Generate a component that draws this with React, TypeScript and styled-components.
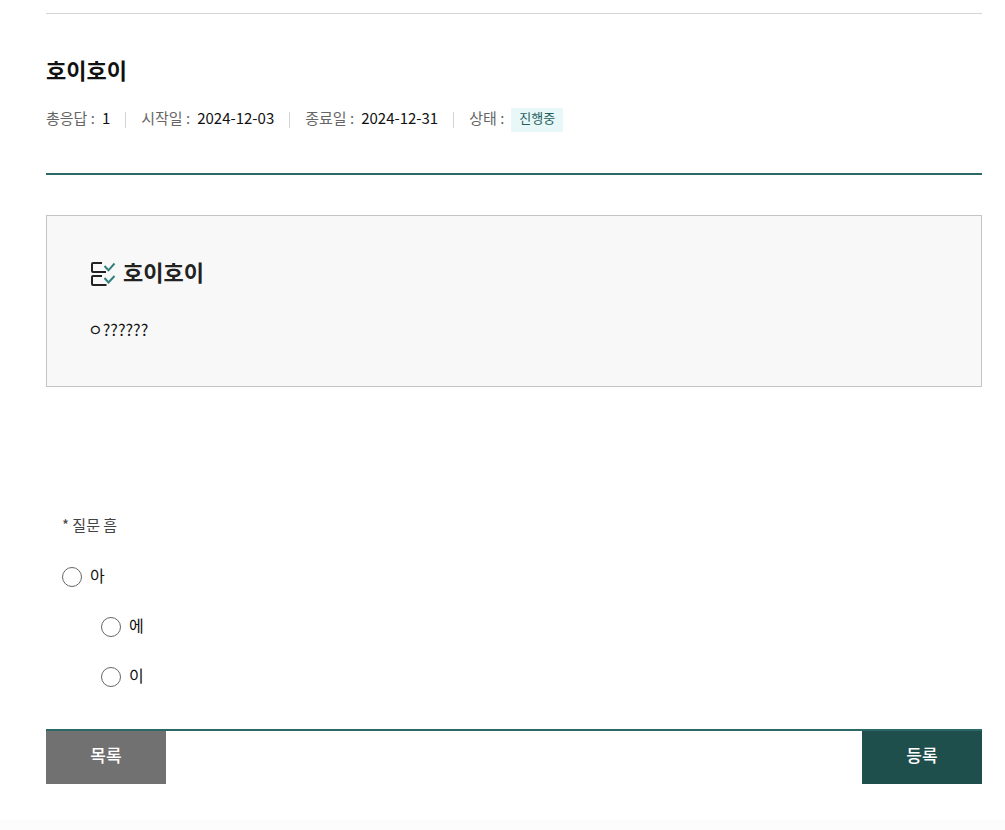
import React from "react";
import styled, { createGlobalStyle } from "styled-components";

const GlobalStyle = createGlobalStyle`
  *, *::before, *::after { box-sizing: border-box; }
  body {
    margin: 0;
    background: #fff;
    color: #111;
    font-family: "Noto Sans CJK KR", "Noto Sans", sans-serif;
    font-size: 15px;
    line-height: 24px;
  }
  h1, h2, p, dl, dt, dd, fieldset, legend { margin: 0; padding: 0; }
`;

const Page = styled.main`
  padding: 13px 23px 36px 46px;
`;

const Header = styled.header`
  padding: 40px 0 41px;
  border-top: 1px solid #d4d4d4;
  border-bottom: 2px solid #2b6966;
`;

const Title = styled.h1`
  font-size: 22px;
  line-height: 30px;
  font-weight: 700;
`;

const MetaList = styled.dl`
  display: flex;
  flex-wrap: wrap;
  margin-top: 24px;
`;

const MetaItem = styled.div`
  display: flex;
  align-items: center;
  gap: 7px;

  & + &::before {
    content: "";
    width: 1px;
    height: 16px;
    margin: 0 8px 0 15px;
    background: #d4d4d4;
  }
`;

const MetaLabel = styled.dt`
  color: #666;
  line-height: 20px;
  padding-bottom: 4px;
`;

const MetaValue = styled.dd`
  line-height: 20px;
  padding-bottom: 4px;
`;

const StatusBadge = styled.dd`
  padding: 0 8px 4px;
  background: #e8f7f7;
  color: #1f5f5c;
  font-size: 13px;
  line-height: 20px;
`;

const Intro = styled.section`
  margin-top: 40px;
  padding: 40px 41px 44px;
  min-height: 172px;
  border: 1px solid #c4c4c4;
  background: #f8f8f8;
`;

const IntroTitle = styled.h2`
  display: flex;
  align-items: flex-start;
  gap: 7px;
  font-size: 22px;
  line-height: 30px;
  font-weight: 700;
  color: #222;

  svg { margin: 5px 0 0 2px; }
`;

const IntroText = styled.p`
  margin-top: 30px;
  font-size: 16px;
  line-height: 24px;
`;

const Question = styled.fieldset`
  margin-top: 124px;
  padding: 0 16px 40px;
  border: 0;
  min-width: 0;
`;

const QuestionTitle = styled.legend`
  color: #444;
  line-height: 28px;
`;

const Options = styled.div`
  display: grid;
  gap: 26px;
  padding-top: 26px;
`;

const Option = styled.label<{ $nested?: boolean }>`
  display: flex;
  align-items: flex-start;
  gap: 8px;
  height: 24px;
  padding-left: ${({ $nested }) => ($nested ? "39px" : "0")};
  font-size: 16px;
  line-height: 20px;
`;

const Radio = styled.input`
  appearance: none;
  width: 20px;
  height: 20px;
  margin: 2px 0 0;
  border: 1px solid #666;
  border-radius: 50%;
  background: #fff;

  &:checked {
    border: 6px solid #2b6966;
  }
`;

const Actions = styled.div`
  display: flex;
  justify-content: space-between;
  border-top: 2px solid #2b6966;
`;

const ActionButton = styled.button<{ $primary?: boolean }>`
  width: 120px;
  height: 53px;
  padding: 0 0 6px;
  border: 0;
  background: ${({ $primary }) => ($primary ? "#1f4f4d" : "#717171")};
  color: #fff;
  font-family: inherit;
  font-size: 17px;
  font-weight: 500;
  line-height: 24px;
  cursor: pointer;
`;

const Footer = styled.footer`
  height: 10px;
  background: #fcfcfc;
`;

const ChecklistIcon = () => (
  <svg width="26" height="26" viewBox="0 0 26 26" fill="none" strokeWidth="2" aria-hidden="true">
    <g stroke="#222">
      <path d="M12 2H3Q2 2 2 3V10Q2 11 3 11H16" />
      <path d="M12 15H3Q2 15 2 16V23Q2 24 3 24H16.500" />
    </g>
    <g stroke="#35807c">
      <path d="M14.500 5L18.500 9.300L24.500 2.500" />
      <path d="M14.500 17L18.500 21.500L24.500 15" />
    </g>
  </svg>
);

const meta = [
  { label: "총응답 :", value: "1" },
  { label: "시작일 :", value: "2024-12-03" },
  { label: "종료일 :", value: "2024-12-31" },
];

const options = [
  { label: "아", nested: false },
  { label: "에", nested: true },
  { label: "이", nested: true },
];

export default function App() {
  return (
    <>
      <GlobalStyle />
      <Page>
        <Header>
          <Title>호이호이</Title>
          <MetaList>
            {meta.map((item) => (
              <MetaItem key={item.label}>
                <MetaLabel>{item.label}</MetaLabel>
                <MetaValue>{item.value}</MetaValue>
              </MetaItem>
            ))}
            <MetaItem>
              <MetaLabel>상태 :</MetaLabel>
              <StatusBadge>진행중</StatusBadge>
            </MetaItem>
          </MetaList>
        </Header>
        <Intro>
          <IntroTitle>
            <ChecklistIcon />
            호이호이
          </IntroTitle>
          <IntroText>ㅇ??????</IntroText>
        </Intro>
        <form onSubmit={(event) => event.preventDefault()}>
          <Question>
            <QuestionTitle>* 질문 흠</QuestionTitle>
            <Options>
              {options.map((option) => (
                <Option key={option.label} $nested={option.nested}>
                  <Radio type="radio" name="answer" value={option.label} />
                  {option.label}
                </Option>
              ))}
            </Options>
          </Question>
          <Actions>
            <ActionButton type="button">목록</ActionButton>
            <ActionButton type="submit" $primary>등록</ActionButton>
          </Actions>
        </form>
      </Page>
      <Footer />
    </>
  );
}
